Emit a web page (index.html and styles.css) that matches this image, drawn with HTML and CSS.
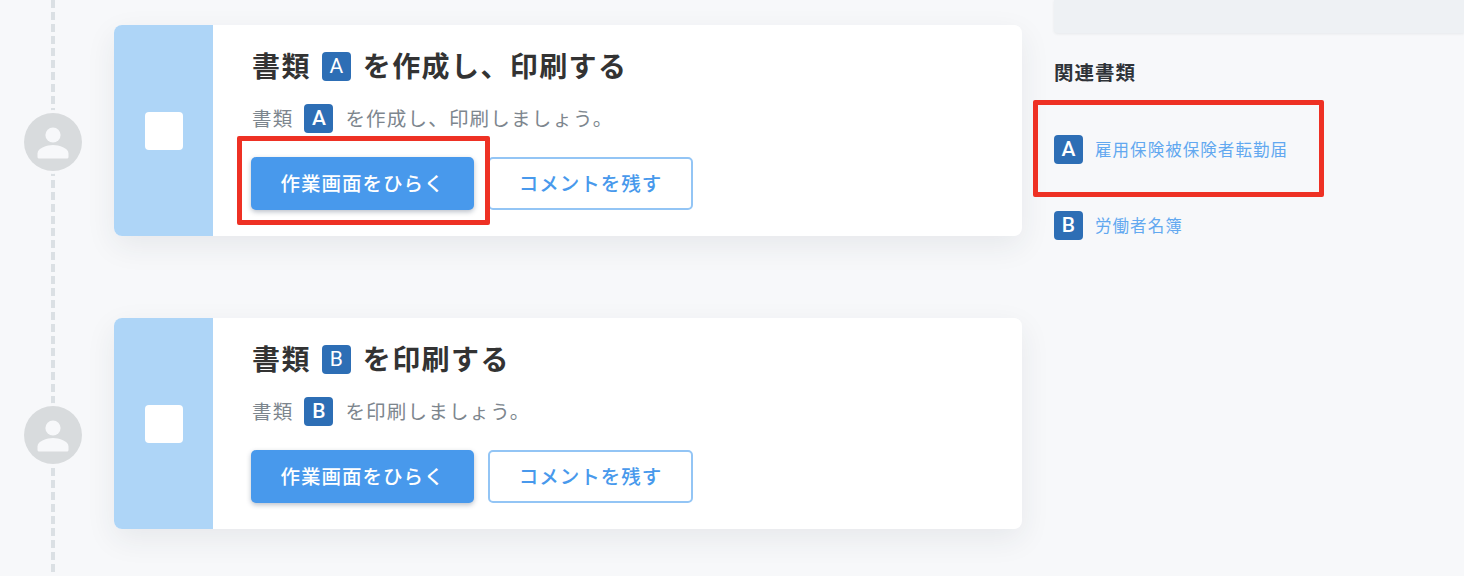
FILE: index.html
```html
<!DOCTYPE html>
<html lang="ja">
<head>
<meta charset="utf-8">
<title>書類</title>
<link rel="stylesheet" href="styles.css">
</head>
<body>
<div class="page">
  <main class="timeline">
    <section class="step">
      <div class="marker"><div class="avatar"><svg viewBox="0 0 58 58" width="58" height="58"><circle cx="29" cy="22" r="7.6"/><path d="M13.500 44v-3.500c0-5.500 9.500-8.500 15.500-8.500s15.500 3 15.500 8.500V44c0 .8-.7 1.500-1.500 1.500H15c-.8 0-1.500-.7-1.500-1.500z"/></svg></div></div>
      <article class="card">
        <div class="band"><span class="check"></span></div>
        <div class="body">
          <h2 class="title"><span class="txt">書類</span><span class="badge">A</span><span class="txt">を作成し、印刷する</span></h2>
          <p class="desc"><span class="txt">書類</span><span class="badge">A</span><span class="txt">を作成し、印刷しましょう。</span></p>
          <div class="actions">
            <a class="btn primary marked">作業画面をひらく</a>
            <a class="btn outline">コメントを残す</a>
          </div>
        </div>
      </article>
    </section>
    <section class="step">
      <div class="marker"><div class="avatar"><svg viewBox="0 0 58 58" width="58" height="58"><circle cx="29" cy="22" r="7.6"/><path d="M13.500 44v-3.500c0-5.500 9.500-8.500 15.500-8.500s15.500 3 15.500 8.500V44c0 .8-.7 1.500-1.500 1.500H15c-.8 0-1.500-.7-1.500-1.500z"/></svg></div></div>
      <article class="card">
        <div class="band"><span class="check"></span></div>
        <div class="body">
          <h2 class="title"><span class="txt">書類</span><span class="badge">B</span><span class="txt">を印刷する</span></h2>
          <p class="desc"><span class="txt">書類</span><span class="badge">B</span><span class="txt">を印刷しましょう。</span></p>
          <div class="actions">
            <a class="btn primary">作業画面をひらく</a>
            <a class="btn outline">コメントを残す</a>
          </div>
        </div>
      </article>
    </section>
  </main>
  <aside class="side">
    <div class="panel"></div>
    <h3 class="side-title">関連書類</h3>
    <ul class="docs">
      <li class="doc marked-doc"><span class="badge">A</span><a class="txt">雇用保険被保険者転勤届</a></li>
      <li class="doc"><span class="badge">B</span><a class="txt">労働者名簿</a></li>
    </ul>
  </aside>
</div>
</body>
</html>
```

FILE: styles.css
```css
* { box-sizing: border-box; }
html, body { margin: 0; height: 100%; }
body {
  background: #f7f8fa;
  color: #333;
  font-family: "Noto Sans CJK JP", "Noto Sans", sans-serif;
  overflow: hidden;
}
.page { display: flex; height: 576px; overflow: hidden; }
.timeline {
  position: relative;
  width: 1022px;
  flex: none;
  padding-top: 25px;
  display: flex;
  flex-direction: column;
  gap: 82px;
}
.timeline::before {
  content: "";
  position: absolute;
  left: 51px;
  top: 0;
  bottom: 0;
  width: 4px;
  background: repeating-linear-gradient(to bottom, #dbe0e4 0 8px, transparent 8px 12px);
}
.step { display: flex; position: relative; }
.marker { width: 114px; flex: none; padding: 88px 0 0 24px; }
.avatar {
  position: relative;
  width: 58px;
  height: 58px;
  border-radius: 50%;
  background: #d8dbdd;
  box-shadow: 0 0 0 3px #f7f8fa;
}
.avatar svg { display: block; fill: #f7f8fa; }
.card {
  flex: 1;
  height: 211px;
  display: flex;
  background: #fff;
  border-radius: 8px;
  overflow: hidden;
  box-shadow: 0 10px 30px rgba(40, 50, 60, .08);
}
.band {
  width: 99px;
  flex: none;
  background: #aed5f7;
  display: flex;
  align-items: center;
  justify-content: center;
}
.check { width: 38px; height: 38px; background: #fff; border-radius: 4px; }
.body { flex: 1; padding: 27px 0 0 38px; }
.title, .desc { margin: 0; padding-left: 1px; display: flex; align-items: center; height: 29px; white-space: nowrap; }
.title { gap: 11px; font-size: 28px; font-weight: 700; letter-spacing: 1.4px; color: #333; }
.title .txt { padding-bottom: 4px; }
.title .badge { margin-right: 1px; font-weight: 400; }
.desc { margin-top: 23px; gap: 11px; font-size: 19.500px; font-weight: 400; letter-spacing: 1.200px; color: #7d868e; }
.desc .txt { padding-bottom: 2px; }
.desc .badge { margin-right: 1px; }
.badge {
  width: 29px;
  height: 29px;
  flex: none;
  background: #2d6eb5;
  color: #fff;
  border-radius: 4px;
  display: flex;
  align-items: center;
  justify-content: center;
  font-family: Roboto, "Noto Sans", sans-serif;
  font-size: 21px;
  font-weight: 500;
  letter-spacing: 0;
  line-height: 1;
}
.actions { display: flex; gap: 14px; margin-top: 24px; }
.btn {
  height: 53px;
  padding-bottom: 2px;
  display: flex;
  align-items: center;
  justify-content: center;
  border-radius: 5px;
  font-size: 19.500px;
  font-weight: 500;
  letter-spacing: 1px;
}
.primary { width: 223px; background: #4899ec; color: #fff; box-shadow: 0 2px 5px rgba(30, 50, 80, .3); }
.outline { width: 205px; background: #fff; color: #4899ec; border: 2px solid #93c5f5; }
.marked, .marked-doc { position: relative; }
.marked::after, .marked-doc::after {
  content: "";
  position: absolute;
  border: 5px solid #ee3124;
  border-radius: 2px;
}
.marked::after { top: -21px; right: -16px; bottom: -15px; left: -14px; }
.side { flex: 1; padding-left: 32px; min-width: 0; }
.panel {
  height: 33px;
  background: #eef1f4;
  border-radius: 0 0 0 4px;
  box-shadow: 0 1px 3px rgba(40, 50, 60, .08);
}
.side-title { margin: 26px 0 0; height: 26px; line-height: 26px; font-size: 19.500px; font-weight: 700; letter-spacing: 1px; color: #2f3338; }
.docs { list-style: none; margin: 50px 0 0; padding: 0; display: flex; flex-direction: column; gap: 47px; }
.doc { display: flex; align-items: center; gap: 12px; width: fit-content; font-size: 16.500px; letter-spacing: 1.050px; color: #62a8f0; white-space: nowrap; }
.doc .txt { padding-bottom: 2px; }
.marked-doc::after { top: -35px; right: -36px; bottom: -33px; left: -21px; }
```
